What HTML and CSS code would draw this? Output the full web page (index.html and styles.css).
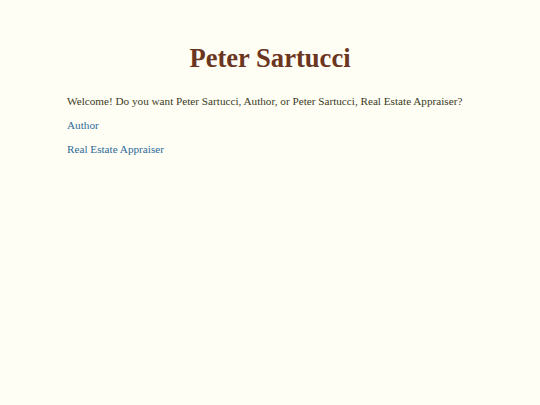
FILE: index.html
```html
<!DOCTYPE html>
<html>
<head>
<meta charset="utf-8">
<link rel="stylesheet" href="styles.css">
</head>
<body>
<div class="page">
  <h1 class="title">Peter Sartucci</h1>
  <p class="intro">Welcome! Do you want Peter Sartucci, Author, or Peter Sartucci, Real Estate Appraiser?</p>
  <p class="choice"><a href="#" class="link">Author</a></p>
  <p class="choice"><a href="#" class="link">Real Estate Appraiser</a></p>
</div>
</body>
</html>
```
FILE: styles.css
```css
html, body {
  margin: 0;
  padding: 0;
  background: #fffef5;
}
.page {
  padding: 40px 20px 0 67px;
  font-family: "Liberation Serif", serif;
  font-size: 11.2px;
  color: #3b3a1c;
}
.title {
  margin: 0 47px 18px 0;
  text-align: center;
  font-size: 26.6px;
  font-weight: bold;
  color: #6b3621;
  line-height: 36px;
}
.intro, .choice {
  margin: 0 0 10px 0;
  line-height: 14px;
}
.link {
  color: #2d6b98;
  text-decoration: none;
}
```
